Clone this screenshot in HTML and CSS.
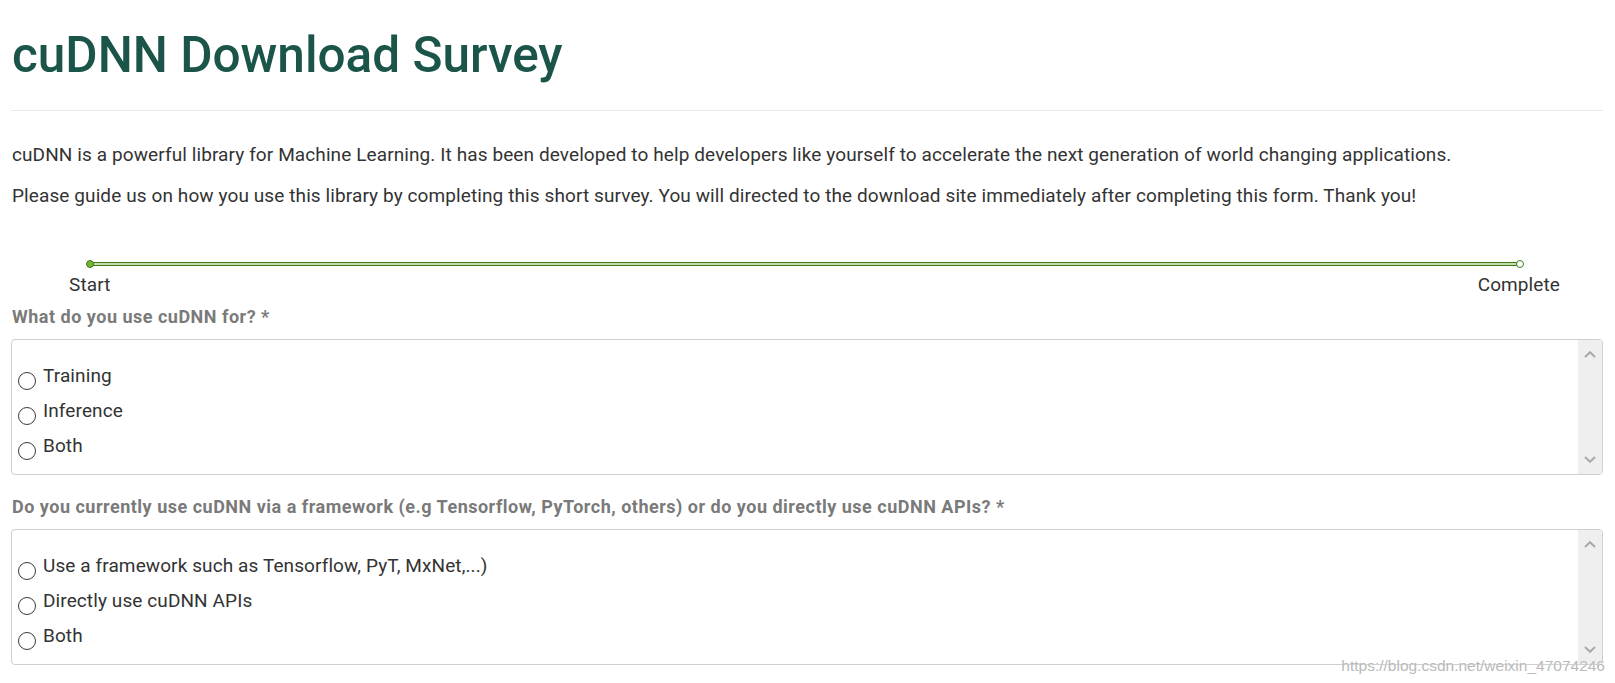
FILE: index.html
```html
<!DOCTYPE html>
<html lang="en">
<head>
<meta charset="utf-8">
<title>cuDNN Download Survey</title>
<link rel="stylesheet" href="styles.css">
</head>
<body>
<div class="page">
  <h1 class="title">cuDNN Download Survey</h1>
  <hr class="rule">
  <p class="intro intro-first">cuDNN is a powerful library for Machine Learning. It has been developed to help developers like yourself to accelerate the next generation of world changing applications.</p>
  <p class="intro">Please guide us on how you use this library by completing this short survey. You will directed to the download site immediately after completing this form. Thank you!</p>

  <div class="progress">
    <div class="progress-track">
      <span class="dot dot-start"></span>
      <span class="dot dot-end"></span>
    </div>
    <div class="progress-labels">
      <span>Start</span>
      <span>Complete</span>
    </div>
  </div>

  <div class="question">
    <label class="q-label">What do you use cuDNN for? *</label>
    <div class="choice-box">
      <div class="choices">
        <label class="choice"><input class="radio" type="radio" name="use">Training</label>
        <label class="choice"><input class="radio" type="radio" name="use">Inference</label>
        <label class="choice"><input class="radio" type="radio" name="use">Both</label>
      </div>
      <div class="scrollbar">
        <svg class="chevron" width="12" height="7" viewBox="0 0 12 7"><polyline points="1,6 6,1.2 11,6"/></svg>
        <svg class="chevron" width="12" height="7" viewBox="0 0 12 7"><polyline points="1,1 6,5.8 11,1"/></svg>
      </div>
    </div>
  </div>

  <div class="question">
    <label class="q-label">Do you currently use cuDNN via a framework (e.g Tensorflow, PyTorch, others) or do you directly use cuDNN APIs? *</label>
    <div class="choice-box">
      <div class="choices">
        <label class="choice"><input class="radio" type="radio" name="mode">Use a framework such as Tensorflow, PyT, MxNet,...)</label>
        <label class="choice"><input class="radio" type="radio" name="mode">Directly use cuDNN APIs</label>
        <label class="choice"><input class="radio" type="radio" name="mode">Both</label>
      </div>
      <div class="scrollbar">
        <svg class="chevron" width="12" height="7" viewBox="0 0 12 7"><polyline points="1,6 6,1.2 11,6"/></svg>
        <svg class="chevron" width="12" height="7" viewBox="0 0 12 7"><polyline points="1,1 6,5.8 11,1"/></svg>
      </div>
    </div>
  </div>

  <div class="watermark">https://blog.csdn.net/weixin_47074246</div>
</div>
</body>
</html>
```

FILE: styles.css
```css
html, body {
  margin: 0;
  background: #fff;
}

.page {
  position: relative;
  padding: 0 12px 19px 11px;
  font-family: Roboto, "Liberation Sans", Arial, sans-serif;
  color: #333;
}

/* heading */
.title {
  margin: 0;
  padding: 30px 0 0 1px;
  font-size: 49.5px;
  line-height: 50px;
  font-weight: 500;
  color: #1b5448;
}

.rule {
  margin: 30px 0 0;
  height: 0;
  border: 0;
  border-top: 1px solid #e9e9e9;
}

/* intro copy */
.intro {
  margin: 17px 0 0;
  padding-left: 1px;
  font-size: 19px;
  line-height: 24px;
  letter-spacing: 0.1px;
}

.intro-first {
  margin-top: 32px;
}

/* progress indicator */
.progress {
  margin-top: 54px;
}

.progress-track {
  position: relative;
  height: 2px;
  margin: 0 83px 0 79px;
  border-top: 1px solid #3e7b14;
  border-bottom: 1px solid #3e7b14;
  background: #c4dcaa;
}

.dot {
  position: absolute;
  top: 50%;
  width: 8px;
  height: 8px;
  box-sizing: border-box;
  border: 1px solid #3e7b14;
  border-radius: 50%;
  transform: translate(-50%, -50%);
}

.dot-start {
  left: 0;
  background: #74b43c;
}

.dot-end {
  left: 100%;
  background: #fff;
}

.progress-labels {
  display: flex;
  justify-content: space-between;
  margin-top: 7px;
  padding: 0 43px 0 58px;
  font-size: 19px;
  line-height: 24px;
  letter-spacing: 0.1px;
}

/* questions */
.question {
  margin-top: 20px;
}

.progress + .question {
  margin-top: 8px;
}

.q-label {
  display: block;
  margin: 0 0 10px;
  padding-left: 1px;
  font-size: 18px;
  line-height: 24px;
  font-weight: 700;
  letter-spacing: 0.5px;
  color: #7a7a7a;
}

.choice-box {
  display: flex;
  height: 136px;
  box-sizing: border-box;
  border: 1px solid #cfcfcf;
  border-radius: 4px;
  overflow: hidden;
}

.choices {
  flex: 1;
  padding: 18px 0 0 5px;
}

.choice {
  display: block;
  height: 35px;
  font-size: 19px;
  line-height: 35px;
  letter-spacing: 0.1px;
  color: #333;
}

.radio {
  appearance: none;
  -webkit-appearance: none;
  width: 18px;
  height: 18px;
  margin: 0 7px 0 1px;
  box-sizing: border-box;
  border: 1px solid #3a3a3a;
  border-radius: 50%;
  background: #fff;
  vertical-align: -8px;
}

.scrollbar {
  display: flex;
  flex-direction: column;
  justify-content: space-between;
  align-items: center;
  width: 24px;
  padding: 11px 0;
  background: #efefef;
}

.chevron polyline {
  fill: none;
  stroke: #a9a9a9;
  stroke-width: 2;
}

/* image host stamp in the corner */
.watermark {
  position: absolute;
  z-index: 2;
  right: 10px;
  top: 657px;
  font-family: "Liberation Sans", Arial, sans-serif;
  font-size: 15.5px;
  line-height: 18px;
  color: #b9b9b9;
  text-shadow: 0 0 1px #fff;
}
```
